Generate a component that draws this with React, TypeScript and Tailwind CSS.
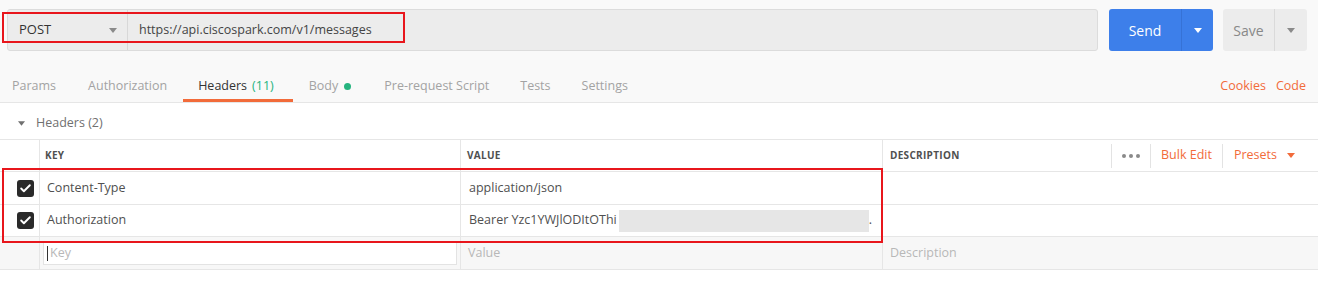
import { Check } from 'lucide-react';

function Caret({ className }: { className: string }) {
  return (
    <svg width="8" height="5" viewBox="0 0 8 5" className={className}>
      <path d="M0 0 L8 0 L4 5 Z" fill="currentColor" />
    </svg>
  );
}

const TABS = [
  { label: 'Params', pad: 'pl-[12px] pr-[16px]' },
  { label: 'Authorization', pad: 'px-[16px]' },
  { label: 'Headers', count: '(11)', active: true, pad: 'pl-[15px] pr-[19px]' },
  { label: 'Body', dot: true, pad: 'pl-[16px] pr-[17px]' },
  { label: 'Pre-request Script', pad: 'px-[16px]' },
  { label: 'Tests', pad: 'pl-[15px] pr-[15px]' },
  { label: 'Settings', pad: 'px-[16px]' },
];

function Checkbox() {
  return (
    <div className="w-[17px] h-[17px] rounded-[3px] bg-[#2a2a2a] flex items-center justify-center">
      <Check className="w-[13px] h-[13px] text-white" strokeWidth={3.5} />
    </div>
  );
}

export default function App() {
  return (
    <div className="relative w-[1318px] h-[281px] overflow-hidden bg-white font-['Open_Sans',sans-serif] text-[12.5px]">
      {/* Request bar */}
      <div className="bg-[#f9f9f9]">
        <div className="flex h-[51px] pt-[9px] pl-[7px] pr-[11px]">
          <div className="flex flex-1 h-[42px] bg-[#ececec] border border-[#dcdcdc] rounded-[3px]">
            <div className="w-[120px] flex items-center justify-between pl-[11px] pr-[10px] border-r border-[#d8d8d8]">
              <span className="text-[#333] text-[13px] font-medium">POST</span>
              <Caret className="text-[#8a8a8a]" />
            </div>
            <div className="flex items-center pl-[11px] text-[#444]">https://api.ciscospark.com/v1/messages</div>
          </div>
          <div className="flex ml-[11px] w-[104px] h-[42px] bg-[#3d7fea] rounded-[3px] text-white">
            <div className="w-[72px] flex items-center justify-center text-[14px]">Send</div>
            <div className="flex-1 flex items-center justify-center border-l border-[#3672d6]">
              <Caret className="text-white" />
            </div>
          </div>
          <div className="flex ml-[10px] w-[84px] h-[42px] bg-[#ececec] rounded-[3px] text-[#888]">
            <div className="w-[51px] flex items-center justify-center text-[14px]">Save</div>
            <div className="flex-1 flex items-center justify-center border-l border-[#dadada]">
              <Caret className="text-[#8a8a8a]" />
            </div>
          </div>
        </div>

        {/* Tabs */}
        <div className="flex items-end justify-between h-[52px] border-b border-[#e6e6e6] pr-[12px]">
          <div className="flex">
            {TABS.map(t => (
              <div
                key={t.label}
                className={`flex items-center ${t.pad} pt-[27px] pb-[3px] border-b-[3px] ${
                  t.active ? 'border-[#f26b3a] text-[#333]' : 'border-transparent text-[#a3a3a3]'
                }`}
              >
                <span>{t.label}</span>
                {t.count && <span className="ml-[5px] text-[#26b47f]">{t.count}</span>}
                {t.dot && <span className="ml-[6px] w-[7px] h-[7px] rounded-full bg-[#26b47f]" />}
              </div>
            ))}
          </div>
          <div className="flex gap-[10px] pb-[6px] text-[#f26b3a]">
            <span>Cookies</span>
            <span>Code</span>
          </div>
        </div>
      </div>

      {/* Headers section */}
      <div className="flex items-center h-[36px] pt-[4px] pl-[18px] text-[#707070]">
        <Caret className="text-[#707070] w-[7px]" />
        <span className="ml-[11px]">Headers (2)</span>
      </div>

      <div className="border-t border-[#e6e6e6]">
        {/* header row */}
        <div className="grid grid-cols-[40px_421px_422px_1fr] h-[32px] border-b border-[#e6e6e6] text-[10px] font-bold text-[#505050] tracking-[0.3px]">
          <div className="border-r border-[#e6e6e6]" />
          <div className="flex items-center pl-[5px] border-r border-[#e6e6e6]">KEY</div>
          <div className="flex items-center pl-[6px] border-r border-[#e6e6e6]">VALUE</div>
          <div className="flex items-center justify-between pl-[7px] pr-[23px]">
            <span>DESCRIPTION</span>
            <div className="flex items-center font-normal text-[12.5px] tracking-normal">
              <div className="w-px h-[24px] bg-[#e3e3e3]" />
              <div className="flex gap-[3px] px-[10px]">
                <span className="w-[4px] h-[4px] rounded-full bg-[#8a8a8a]" />
                <span className="w-[4px] h-[4px] rounded-full bg-[#8a8a8a]" />
                <span className="w-[4px] h-[4px] rounded-full bg-[#8a8a8a]" />
              </div>
              <div className="w-px h-[24px] bg-[#e3e3e3]" />
              <span className="px-[10px] text-[#f26b3a]">Bulk Edit</span>
              <div className="w-px h-[24px] bg-[#e3e3e3]" />
              <span className="pl-[11px] text-[#f26b3a]">Presets</span>
              <Caret className="ml-[10px] text-[#f26b3a]" />
            </div>
          </div>
        </div>

        {/* data rows */}
        <div className="grid grid-cols-[40px_421px_422px_1fr] h-[33px] border-b border-[#e6e6e6] text-[#505050]">
          <div className="flex items-center pl-[17px] border-r border-[#e6e6e6]"><Checkbox /></div>
          <div className="flex items-center pl-[7px] border-r border-[#e6e6e6]">Content-Type</div>
          <div className="flex items-center pl-[8px] border-r border-[#e6e6e6]">application/json</div>
          <div />
        </div>
        <div className="grid grid-cols-[40px_421px_422px_1fr] h-[32px] border-b border-[#e6e6e6] text-[#505050]">
          <div className="flex items-center pl-[17px] border-r border-[#e6e6e6]"><Checkbox /></div>
          <div className="flex items-center pl-[7px] border-r border-[#e6e6e6]">Authorization</div>
          <div className="flex items-center pl-[8px] border-r border-[#e6e6e6]">
            <span>Bearer Yzc1YWJlODItOThi</span>
            <span className="ml-[2px] w-[250px] h-[22px] bg-[#e6e6e6]" />
            <span>.</span>
          </div>
          <div />
        </div>
        <div className="grid grid-cols-[40px_421px_422px_1fr] h-[33px] border-b border-[#e6e6e6] bg-[#f7f7f7] text-[#b8b8b8]">
          <div className="border-r border-[#e6e6e6]" />
          <div className="flex items-center pl-[3px] pr-[3px] border-r border-[#e6e6e6]">
            <div className="flex items-center w-full h-[24px] bg-white border border-[#e3e3e3] pl-[3px]">
              <span className="w-px h-[15px] bg-[#333] mr-[2px]" />
              <span>Key</span>
            </div>
          </div>
          <div className="flex items-center pl-[7px] border-r border-[#e6e6e6]">Value</div>
          <div className="flex items-center pl-[7px]">Description</div>
        </div>
      </div>

      {/* annotation boxes */}
      <div className="absolute left-[2px] top-[12px] w-[403px] h-[31px] border-2 border-[#e8161c]" />
      <div className="absolute left-[2px] top-[168px] w-[881px] h-[75px] border-2 border-[#e8161c]" />
    </div>
  );
}
